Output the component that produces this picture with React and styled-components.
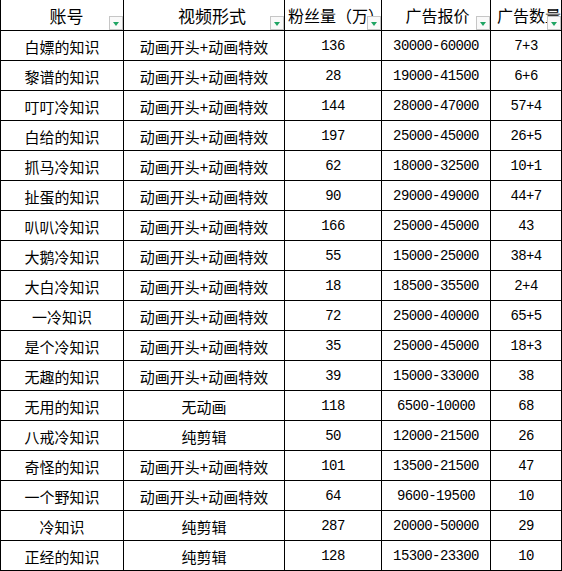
import React from 'react';
import styled, { createGlobalStyle } from 'styled-components';

const Global = createGlobalStyle`
  *, *::before, *::after { box-sizing: border-box; }
  html, body { margin: 0; padding: 0; background: #fff; }
  body { font-family: "Noto Sans CJK SC", sans-serif; color: #000; }
`;

const Sheet = styled.div`
  display: grid;
  grid-template-columns: 124px 161px 97px 109px 71px;
  grid-template-rows: 31px;
  grid-auto-rows: 30px;
  width: 562px;
`;

const Cell = styled.div`
  border-right: 1px solid #000;
  border-bottom: 1px solid #000;
  ${p => (p.$first ? 'border-left: 1px solid #000;' : '')}
  display: flex;
  align-items: center;
  justify-content: center;
  white-space: nowrap;
  overflow: hidden;
  line-height: 1;
  font-size: ${p => (p.$num ? '14px' : '15px')};
  letter-spacing: ${p => (p.$num ? '-0.6px' : '0')};
  font-family: ${p =>
    p.$num ? '"Liberation Mono", monospace' : '"Noto Sans CJK SC", sans-serif'};
  padding-top: 1px;
`;

const HeadCell = styled(Cell)`
  position: relative;
  justify-content: ${p => (p.$left ? 'flex-start' : 'center')};
  padding-left: ${p => p.$pl || 0}px;
  padding-top: ${p => p.$pt || 0}px;
  font-size: ${p => p.$size}px;
  letter-spacing: 0;
`;

const Filter = styled.span`
  position: absolute;
  right: 0;
  bottom: 0;
  width: 14px;
  height: 14px;
  border: 1px solid #c6c6c6;
  background: #f9f9f9;
  display: flex;
  align-items: center;
  justify-content: center;
  &::after {
    content: '';
    border-left: 3.5px solid transparent;
    border-right: 3.5px solid transparent;
    border-top: 4px solid #1fa463;
    margin-top: 2px;
  }
`;

const headers = [
  { t: '账号', size: 17, pl: 9 },
  { t: '视频形式', size: 17, pl: 16 },
  { t: '粉丝量（万）', size: 16, pl: 3, left: true },
  { t: '广告报价', size: 16, pl: 3 },
  { t: '广告数量', size: 16, pl: 6, left: true },
];

const A = '动画开头+动画特效';
const rows = [
  ['白嫖的知识', A, '136', '30000-60000', '7+3'],
  ['黎谱的知识', A, '28', '19000-41500', '6+6'],
  ['叮叮冷知识', A, '144', '28000-47000', '57+4'],
  ['白给的知识', A, '197', '25000-45000', '26+5'],
  ['抓马冷知识', A, '62', '18000-32500', '10+1'],
  ['扯蛋的知识', A, '90', '29000-49000', '44+7'],
  ['叭叭冷知识', A, '166', '25000-45000', '43'],
  ['大鹅冷知识', A, '55', '15000-25000', '38+4'],
  ['大白冷知识', A, '18', '18500-35500', '2+4'],
  ['一冷知识', A, '72', '25000-40000', '65+5'],
  ['是个冷知识', A, '35', '25000-45000', '18+3'],
  ['无趣的知识', A, '39', '15000-33000', '38'],
  ['无用的知识', '无动画', '118', '6500-10000', '68'],
  ['八戒冷知识', '纯剪辑', '50', '12000-21500', '26'],
  ['奇怪的知识', A, '101', '13500-21500', '47'],
  ['一个野知识', A, '64', '9600-19500', '10'],
  ['冷知识', '纯剪辑', '287', '20000-50000', '29'],
  ['正经的知识', '纯剪辑', '128', '15300-23300', '10'],
];

export default function App() {
  return (
    <>
      <Global />
      <Sheet>
        {headers.map((h, i) => (
          <HeadCell
            key={h.t}
            $first={i === 0}
            $size={h.size}
            $pl={h.pl}
            $left={h.left}
          >
            {h.t}
            <Filter />
          </HeadCell>
        ))}
        {rows.map((r, ri) =>
          r.map((v, ci) => (
            <Cell key={ri + '-' + ci} $first={ci === 0} $num={ci >= 2}>
              {v}
            </Cell>
          ))
        )}
      </Sheet>
    </>
  );
}
